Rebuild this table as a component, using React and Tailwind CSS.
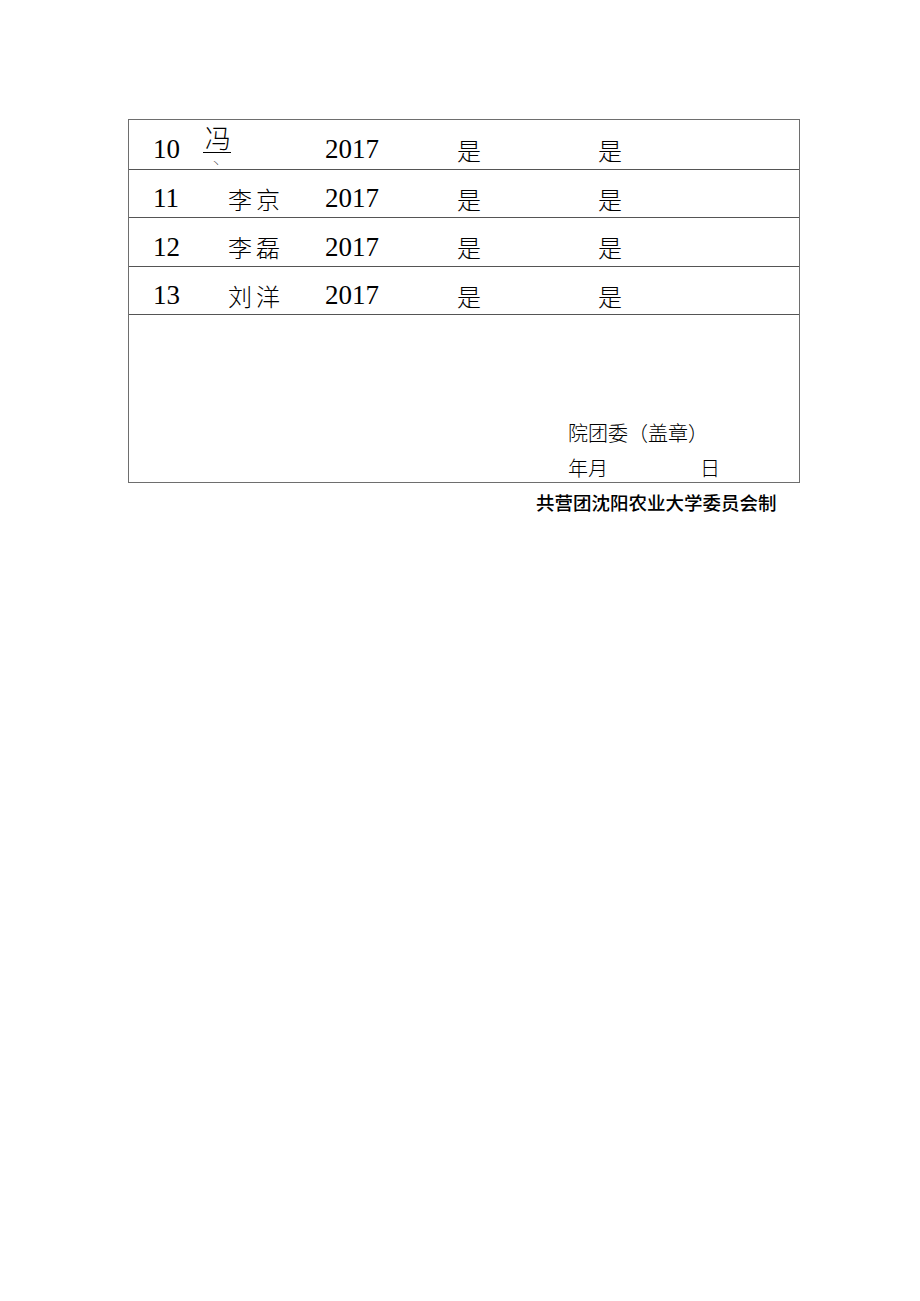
import React from "react";

const rows = [
  { no: "10", name: null, year: "2017", a: "是", b: "是", h: "h-[50px]" },
  { no: "11", name: "李京", year: "2017", a: "是", b: "是", h: "h-[48px]" },
  { no: "12", name: "李磊", year: "2017", a: "是", b: "是", h: "h-[49px]" },
  { no: "13", name: "刘洋", year: "2017", a: "是", b: "是", h: "h-[48px]" },
];

const serif = "font-['Liberation_Serif','Noto_Sans_CJK_SC',serif]";
const cjk = "font-['Noto_Sans_CJK_SC',sans-serif] font-light";

function Feng() {
  // the clipped glyph from the original scan
  return (
    <div className="relative w-[30px] h-full">
      <span className={`absolute left-[2px] top-[4px] text-[26px] leading-none ${cjk}`}>冯</span>
      <div className="absolute left-[0px] top-[32px] w-[28px] h-px bg-black"></div>
      <span className={`absolute left-[8px] top-[38px] text-[10px] leading-none ${cjk}`}>丶</span>
    </div>
  );
}

function App() {
  return (
    <div className="w-[920px] h-[1301px] pt-[119px] bg-white text-black">
      <div className="ml-[128px] w-[672px] border border-[#6e6e6e]">
        {rows.map((r) => (
          <div key={r.no} className={`flex items-center border-b border-[#555] ${r.h}`}>
            <div className={`w-[99px] pl-[24px] pt-[10px] text-[27px] leading-none ${serif}`}>{r.no}</div>
            <div className="w-[97px] h-full flex items-center">
              {r.name ? (
                <span className={`pt-[10px] text-[24px] leading-none tracking-[4px] ${cjk}`}>{r.name}</span>
              ) : (
                <div className="-ml-[25px] h-full"><Feng /></div>
              )}
            </div>
            <div className={`w-[132px] pt-[10px] text-[27px] leading-none ${serif}`}>{r.year}</div>
            <div className={`w-[141px] pt-[10px] text-[24px] leading-none ${cjk}`}>{r.a}</div>
            <div className={`pt-[10px] text-[24px] leading-none ${cjk}`}>{r.b}</div>
          </div>
        ))}
        <div className="h-[167px] flex flex-col justify-end pb-[4px] pl-[439px]">
          <div className={`text-[20px] leading-none ${cjk}`}>院团委（盖章）</div>
          <div className={`mt-[15px] flex text-[20px] leading-none ${cjk}`}>
            <span className="w-[132px]">年月</span>
            <span>日</span>
          </div>
        </div>
      </div>
      <div className="ml-[536px] mt-[10px] text-[18.5px] leading-none font-['Noto_Sans_CJK_SC',sans-serif] font-medium">
        共营团沈阳农业大学委员会制
      </div>
    </div>
  );
}

export default App;
